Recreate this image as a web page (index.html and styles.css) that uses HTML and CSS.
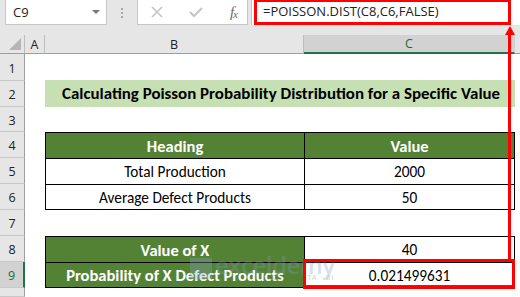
FILE: index.html
```html
<!DOCTYPE html>
<html>
<head>
<meta charset="utf-8">
<link rel="stylesheet" href="styles.css">
</head>
<body>
<div class="app">
  <div class="topbar">
    <div class="namebox"><span class="ref">C9</span><span class="caret"></span></div>
    <div class="dots"><i></i><i></i><i></i></div>
    <div class="fxbox">
      <svg class="ico" width="12" height="12" viewBox="0 0 12 12"><path d="M1 1 L11 11 M11 1 L1 11" stroke="#c4c4c4" stroke-width="1.6" fill="none"/></svg>
      <svg class="ico" width="14" height="12" viewBox="0 0 14 12"><path d="M1 6 L5 10 L13 2" stroke="#c4c4c4" stroke-width="2" fill="none"/></svg>
      <span class="fx">f<sub>x</sub></span>
    </div>
    <div class="formula"><div class="fbox">=POISSON.DIST(C8,C6,FALSE)</div></div>
  </div>
  <div class="sheet">
    <div class="corner"><span class="tri"></span></div>
    <div class="colh cola">A</div>
    <div class="colh colb">B</div>
    <div class="colh colc">C</div>
    <div class="colh cold"></div>

    <div class="rowh">1</div><div class="cell span4"></div>
    <div class="rowh">2</div><div class="cell"></div><div class="cell title span2">Calculating Poisson Probability Distribution for a Specific Value</div><div class="cell"></div>
    <div class="rowh">3</div><div class="cell span4"></div>
    <div class="rowh">4</div><div class="cell"></div><div class="cell th tl">Heading</div><div class="cell th tr">Value</div><div class="cell"></div>
    <div class="rowh">5</div><div class="cell"></div><div class="cell td tl">Total Production</div><div class="cell td tr">2000</div><div class="cell"></div>
    <div class="rowh">6</div><div class="cell"></div><div class="cell td tl bb">Average Defect Products</div><div class="cell td tr bb">50</div><div class="cell"></div>
    <div class="rowh">7</div><div class="cell span4"></div>
    <div class="rowh">8</div><div class="cell"></div><div class="cell th tl">Value of X</div><div class="cell td tr">40</div><div class="cell"></div>
    <div class="rowh sel">9</div><div class="cell"></div><div class="cell th tl bb">Probability of X Defect Products</div><div class="cell td tr bb active">0.021499631</div><div class="cell"></div>
    <div class="rowh"></div><div class="cell span4"></div>
  </div>

  <div class="watermark"><span class="wm-logo"></span><span class="wm-text">exceldemy<small>EXCEL · DATA · BI</small></span></div>
  <div class="redbox"></div>
  <div class="arrow"><span class="head"></span><span class="shaft"></span></div>
</div>
</body>
</html>
```
FILE: styles.css
```css
* { box-sizing: border-box; margin: 0; padding: 0; }
html, body { width: 520px; height: 297px; overflow: hidden; background: #fff; }
body { font-family: Carlito, Calibri, Lato, "Open Sans", sans-serif; color: #000; }
.app { position: relative; width: 520px; height: 297px; }

.topbar {
  height: 35px;
  background: #e6e6e6;
  display: flex;
  align-items: flex-start;
  padding-left: 5px;
}
.namebox {
  width: 102px; height: 25px;
  background: #fff;
  border: 1px solid #c6c6c6;
  border-top: none;
  display: flex; align-items: center; justify-content: space-between;
  padding: 0 6px 0 7px;
  font-family: "Open Sans", sans-serif; font-size: 13px; color: #222;
}
.caret { width: 0; height: 0; border-left: 4px solid transparent; border-right: 4px solid transparent; border-top: 4px solid #777; }
.dots { width: 30px; height: 25px; display: flex; flex-direction: column; align-items: center; justify-content: center; gap: 2px; }
.dots i { display: block; width: 2px; height: 2px; background: #a8a8a8; }
.fxbox {
  width: 111px; height: 25px;
  background: #fff;
  border: 1px solid #c6c6c6; border-top: none;
  display: flex; align-items: center; justify-content: space-between;
  padding: 0 10px 0 13px;
}
.fx { font-family: "Liberation Serif", serif; font-style: italic; font-size: 15px; color: #6a6a6a; letter-spacing: -1px; }
.fx sub { font-size: 11px; vertical-align: -1px; }
.formula {
  flex: 1; height: 25px;
  margin-left: 3px;
  background: #fff;
  border-left: 1px solid #c6c6c6;
  padding: 0 9px 0 2px;
}
.fbox {
  height: 25px;
  border: 3px solid #ff0000;
  border-top-width: 2px;
  font-family: "Open Sans", sans-serif; font-size: 13px; color: #222;
  line-height: 19px;
  padding-left: 6px;
  white-space: nowrap;
}

.sheet {
  display: grid;
  grid-template-columns: 25px 20px 259px 211px 5px;
  grid-template-rows: 19px 27px 26px 25px 26px 26px 26px 26px 26px 26px 9px;
}
.corner { background: #e6e6e6; border-right: 1px solid #bdbdbd; border-bottom: 1px solid #9e9e9e; position: relative; }
.tri { position: absolute; right: 3px; bottom: 3px; width: 0; height: 0; border-left: 12px solid transparent; border-bottom: 12px solid #b5b5b5; }
.colh {
  background: #e6e6e6;
  border-bottom: 1px solid #9e9e9e;
  border-right: 1px solid #bdbdbd;
  font-family: "Open Sans", sans-serif; font-size: 12.5px; color: #222;
  display: flex; align-items: center; justify-content: center;
}
.colh.colc { background: #d2d2d2; color: #1e6b3c; border-bottom: 2px solid #217346; border-right-color: #d2d2d2; }
.colh.cold { border-right: none; }
.rowh {
  background: #e6e6e6;
  border-right: 1px solid #9e9e9e;
  border-bottom: 1px solid #c8c8c8;
  font-family: "Open Sans", sans-serif; font-size: 12.5px; color: #222;
  display: flex; align-items: center; justify-content: center;
  padding-top: 2px;
}
.rowh.sel { background: #d2d2d2; border-right: 2px solid #217346; color: #1e6b3c; }
.cell { background: #fff; display: flex; align-items: center; justify-content: center; font-size: 15.3px; white-space: nowrap; }
.span4 { grid-column: span 4; }
.span2 { grid-column: span 2; }
.title { background: #c6e0b4; font-weight: 700; font-size: 16.9px; justify-content: flex-start; padding-left: 17px; margin-top: -1px; }
.th { background: #548235; color: #fff; font-weight: 700; font-size: 16.5px; }
.td { background: #fff; }
.tl, .tr { border-left: 1px solid #000; border-top: 1px solid #000; }
.tr { border-right: 1px solid #000; }
.bb { border-bottom: 1px solid #000; }
.active { box-shadow: inset -2px -2px 0 #217346; }

.redbox {
  position: absolute; left: 303px; top: 259px; width: 212px; height: 30px;
  border: 3px solid #ff0000;
}
.arrow { position: absolute; left: 504px; top: 26px; width: 11px; height: 234px; display: flex; flex-direction: column; align-items: center; }
.head { width: 0; height: 0; border-left: 5.5px solid transparent; border-right: 5.5px solid transparent; border-bottom: 9px solid #ff0000; }
.shaft { width: 3px; flex: 1; background: #ff0000; }

.watermark { position: absolute; left: 190px; top: 255px; display: flex; align-items: center; gap: 3px; opacity: 0.3; pointer-events: none; }
.wm-logo { width: 22px; height: 22px; background: #8aa6c8; clip-path: polygon(0 0, 100% 0, 100% 100%, 0 100%, 0 50%); }
.wm-text { font-family: "Open Sans", sans-serif; font-size: 24px; line-height: 19px; color: #7e9cc6; font-weight: 600; display: flex; flex-direction: column; align-items: flex-end; letter-spacing: -0.5px; }
.wm-text small { font-size: 7px; line-height: 8px; letter-spacing: 1px; color: #555; font-weight: 400; }
```
